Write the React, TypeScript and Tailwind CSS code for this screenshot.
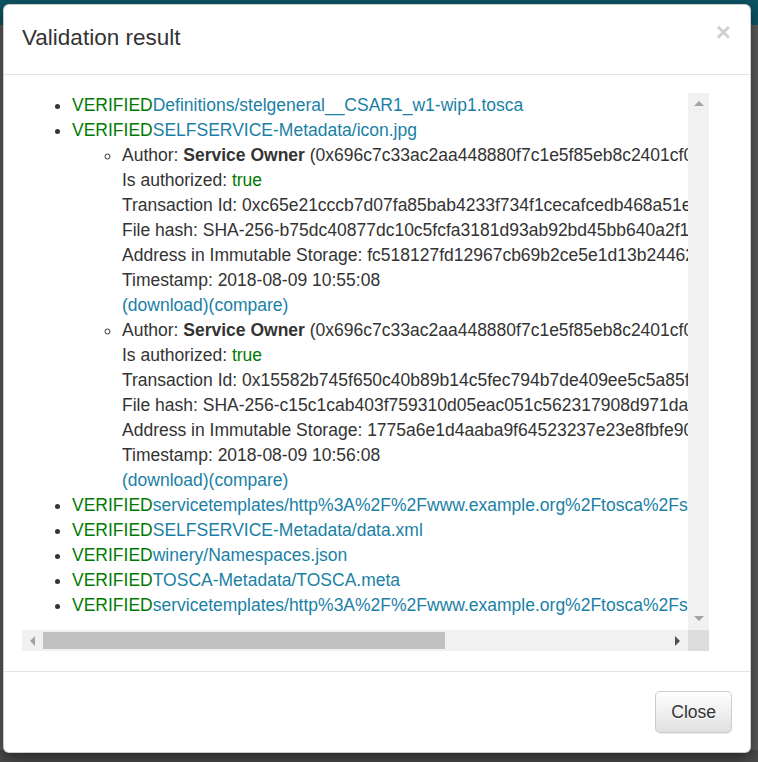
import React from 'react';

const GREEN = 'text-[#007a00]';
const LINK = 'text-[#1b7fa6]';

interface Signature {
  author: string;
  tx: string;
  hash: string;
  address: string;
  timestamp: string;
}

const signatures: Signature[] = [
  {
    author: '0x696c7c33ac2aa448880f7c1e5f85eb8c2401cf0d',
    tx: '0xc65e21cccb7d07fa85bab4233f734f1cecafcedb468a51e3c9f0d2b1a7e6d4c5',
    hash: 'SHA-256-b75dc40877dc10c5fcfa3181d93ab92bd45bb640a2f1e8c7d6b5a49382716f0e',
    address: 'fc518127fd12967cb69b2ce5e1d13b24462a9f8e7d6c5b4a3928170f6e5d4c3b',
    timestamp: '2018-08-09 10:55:08',
  },
  {
    author: '0x696c7c33ac2aa448880f7c1e5f85eb8c2401cf0d',
    tx: '0x15582b745f650c40b89b14c5fec794b7de409ee5c5a85f2e1d0c9b8a7f6e5d4c',
    hash: 'SHA-256-c15c1cab403f759310d05eac051c562317908d971da4b3c2e1f0a9d8c7b6a5',
    address: '1775a6e1d4aaba9f64523237e23e8fbfe90c1d2e3f4a5b6c7d8e9f0a1b2c3d4e',
    timestamp: '2018-08-09 10:56:08',
  },
];

const files = [
  'servicetemplates/http%3A%2F%2Fwww.example.org%2Ftosca%2Fservicetemplates/stelgeneral__CSAR1_w1-wip1/README.md',
  'SELFSERVICE-Metadata/data.xml',
  'winery/Namespaces.json',
  'TOSCA-Metadata/TOSCA.meta',
  'servicetemplates/http%3A%2F%2Fwww.example.org%2Ftosca%2Fservicetemplates/stelgeneral__CSAR1_w1-wip1/LICENSE',
];

function Verified({ path }: { path: string }) {
  return (
    <>
      <span className={GREEN}>VERIFIED</span>
      <a className={LINK}>{path}</a>
    </>
  );
}

function Arrow({ dir, dark }: { dir: 'up' | 'down' | 'left' | 'right'; dark?: boolean }) {
  const fill = dark ? '#505050' : '#a3a3a3';
  const points = {
    up: '0,5 5,0 10,5',
    down: '0,0 10,0 5,5',
    left: '5,0 5,10 0,5',
    right: '0,0 0,10 5,5',
  }[dir];
  const vertical = dir === 'up' || dir === 'down';
  return (
    <svg width={vertical ? 10 : 5} height={vertical ? 5 : 10} viewBox={vertical ? '0 0 10 5' : '0 0 5 10'}>
      <polygon points={points} fill={fill} />
    </svg>
  );
}

export default function App() {
  return (
    <div
      className="w-[758px] h-[762px] overflow-hidden bg-[linear-gradient(to_bottom,#0c5465_0,#0c5465_25px,#5b5b5b_25px,#5b5b5b_750px,#4b4b4b_750px)] pt-[4px] pl-[3px] text-[#333] text-[17.5px] leading-[25px]"
      style={{ fontFamily: '"Liberation Sans", Arial, sans-serif' }}
    >
      <div className="w-[748px] h-[749px] bg-white border border-black/20 rounded-[6px] shadow-[0_5px_15px_rgba(0,0,0,0.5)] flex flex-col">
        {/* header */}
        <div className="flex items-start justify-between pl-[18px] pr-[19px] pt-[17px] pb-[20px] border-b border-[#e5e5e5]">
          <h4 className="text-[22.5px] leading-[32px] font-normal">Validation result</h4>
          <button className="text-[26px] leading-none font-bold text-black/20 mt-[-3px]">×</button>
        </div>

        {/* body */}
        <div className="pl-[18px] pt-[18px] pb-[20px] border-b border-[#e5e5e5]">
          <div className="w-[687px] h-[558px] flex flex-col">
            <div className="flex h-[537px]">
              <div className="w-[666px] overflow-hidden">
                <ul className="list-disc pl-[50px] mb-[12.5px] whitespace-nowrap">
                  <li>
                    <Verified path="Definitions/stelgeneral__CSAR1_w1-wip1.tosca" />
                  </li>
                  <li>
                    <Verified path="SELFSERVICE-Metadata/icon.jpg" />
                    <ul className="list-[circle] pl-[50px]">
                      {signatures.map((s, i) => (
                        <li key={i}>
                          Author: <b>Service Owner</b> ({s.author})
                          <br />
                          Is authorized: <span className={GREEN}>true</span>
                          <br />
                          Transaction Id: {s.tx}
                          <br />
                          File hash: {s.hash}
                          <br />
                          Address in Immutable Storage: {s.address}
                          <br />
                          Timestamp: {s.timestamp}
                          <br />
                          <a className={LINK}>(download)</a>
                          <a className={LINK}>(compare)</a>
                        </li>
                      ))}
                    </ul>
                  </li>
                  {files.map((f, i) => (
                    <li key={i}>
                      <Verified path={f} />
                    </li>
                  ))}
                </ul>
              </div>
              {/* vertical scrollbar */}
              <div className="w-[21px] bg-[#f1f1f1] flex flex-col justify-between items-center pt-[8px] pb-[9px]">
                <Arrow dir="up" />
                <Arrow dir="down" />
              </div>
            </div>
            {/* horizontal scrollbar */}
            <div className="flex h-[21px]">
              <div className="w-[666px] bg-[#f1f1f1] flex items-center">
                <div className="w-[21px] flex justify-center">
                  <Arrow dir="left" />
                </div>
                <div className="w-[402px] h-[17px] bg-[#c1c1c1]" />
                <div className="flex-1" />
                <div className="w-[21px] flex justify-center">
                  <Arrow dir="right" dark />
                </div>
              </div>
              <div className="w-[21px] bg-[#dcdcdc]" />
            </div>
          </div>
        </div>

        {/* footer */}
        <div className="flex justify-end pt-[19px] pr-[18px]">
          <button className="h-[42px] px-[15px] border border-[#ccc] rounded-[5px] bg-[linear-gradient(to_bottom,#fff_0,#e0e0e0_100%)] shadow-[inset_0_1px_0_rgba(255,255,255,0.15),0_1px_1px_rgba(0,0,0,0.075)] [text-shadow:0_1px_0_#fff] text-[#333] leading-[25px]">
            Close
          </button>
        </div>
      </div>
    </div>
  );
}
